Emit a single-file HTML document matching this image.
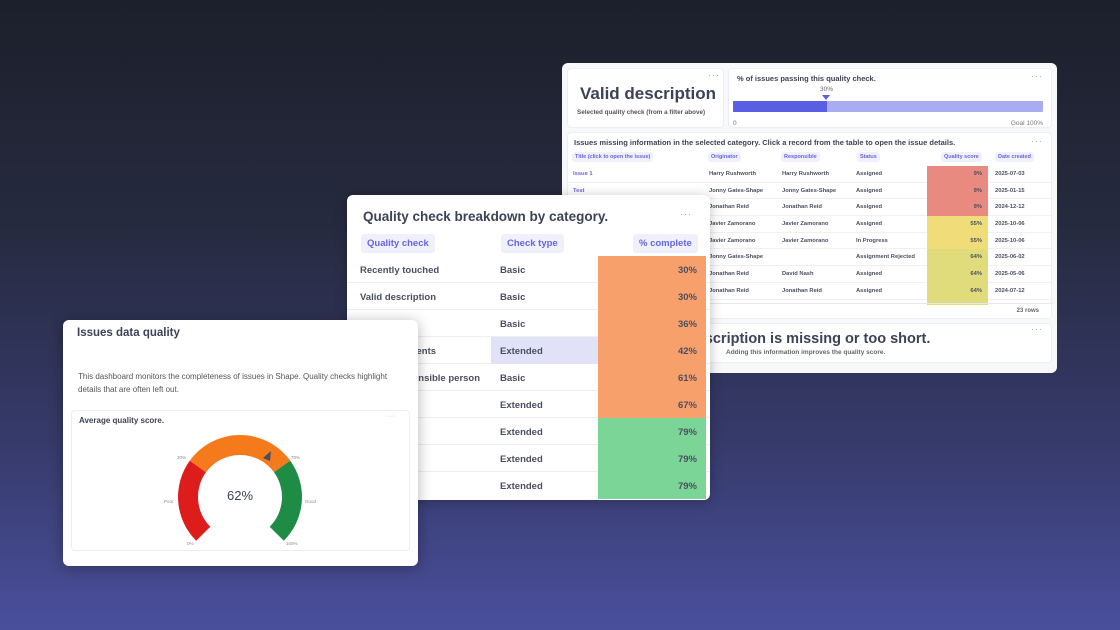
<!DOCTYPE html>
<html><head><meta charset="utf-8"><style>
*{box-sizing:border-box;margin:0;padding:0}
body{width:1120px;height:630px;overflow:hidden;font-family:"Liberation Sans",sans-serif;background:linear-gradient(180deg,#1c202b 0%,#262a3e 35%,#363a6a 70%,#4a4f9c 100%);position:relative;color:#3d4356}
.abs{position:absolute;white-space:nowrap}
.panel{position:absolute;background:#fff;border-radius:6px;overflow:hidden}
.card{position:absolute;border:1px solid #eceef3;border-radius:4px;background:#fff}
.dots{position:absolute;color:#aab;font-size:9px;letter-spacing:1px}
.b{font-weight:bold}
.pill{position:absolute;background:#f0f0fa;color:#6366e0;font-weight:bold;border-radius:3px;white-space:nowrap}
</style></head><body>

<!-- BACK PANEL -->
<div class="panel" style="left:562px;top:63px;width:495px;height:310px;background:#f7f8fa">
  <div class="card" style="left:5px;top:5px;width:157px;height:60px">
    <div class="abs b" style="left:12px;top:15px;font-size:17px;color:#3d4356">Valid description</div>
    <div class="abs b" style="left:9px;top:40px;font-size:6.3px;color:#555">Selected quality check (from a filter above)</div>
    <div class="dots" style="left:140px;top:1px">···</div>
  </div>
  <div class="card" style="left:166px;top:5px;width:324px;height:60px">
    <div class="abs b" style="left:8px;top:5px;font-size:7.5px">% of issues passing this quality check.</div>
    <div class="dots" style="left:302px;top:2px">···</div>
    <div class="abs" style="left:91px;top:17px;font-size:6.5px;color:#666">30%</div>
    <div class="abs" style="left:93px;top:26px;width:0;height:0;border-left:4px solid transparent;border-right:4px solid transparent;border-top:5px solid #5b5fe0"></div>
    <div class="abs" style="left:4px;top:32px;width:310px;height:11px;background:#aaacf2;border-radius:1px"><div style="width:94px;height:11px;background:#5a5ee2"></div></div>
    <div class="abs" style="left:4px;top:51px;font-size:6.5px;color:#777">0</div>
    <div class="abs" style="right:8px;top:51px;font-size:6.5px;color:#777">Goal 100%</div>
  </div>
  <div class="card" style="left:5px;top:69px;width:485px;height:187px">
    <div class="abs b" style="left:6px;top:5px;font-size:7.5px">Issues missing information in the selected category. Click a record from the table to open the issue details.</div>
    <div class="dots" style="left:463px;top:3px">···</div>
    <div class="pill" style="left:4px;top:19px;font-size:5.5px;padding:2px 3px">Title (click to open the issue)</div>
    <div class="pill" style="left:140px;top:19px;font-size:5.5px;padding:2px 3px">Originator</div>
    <div class="pill" style="left:213px;top:19px;font-size:5.5px;padding:2px 3px">Responsible</div>
    <div class="pill" style="left:289px;top:19px;font-size:5.5px;padding:2px 3px">Status</div>
    <div class="pill" style="left:373px;top:19px;font-size:5.5px;padding:2px 3px">Quality score</div>
    <div class="pill" style="left:427px;top:19px;font-size:5.5px;padding:2px 3px">Date created</div>
    <div class="abs" style="left:0;top:33px;width:485px;font-size:5.8px;font-weight:bold;color:#4a4f60">
      <div style="position:relative;height:16.7px;border-bottom:1px solid #f0f0f3"><span class="abs" style="left:5px;top:5px;color:#6366e0">Issue 1</span><span class="abs" style="left:141px;top:5px">Harry Rushworth</span><span class="abs" style="left:214px;top:5px">Harry Rushworth</span><span class="abs" style="left:288px;top:5px">Assigned</span><span class="abs" style="left:359px;top:0;width:61px;height:16.7px;background:#e98a80"><i style="position:absolute;right:6px;top:5px;font-style:normal">9%</i></span><span class="abs" style="left:427px;top:5px">2025-07-03</span></div>
      <div style="position:relative;height:16.7px;border-bottom:1px solid #f0f0f3"><span class="abs" style="left:5px;top:5px;color:#6366e0">Test</span><span class="abs" style="left:141px;top:5px">Jonny Gates-Shape</span><span class="abs" style="left:214px;top:5px">Jonny Gates-Shape</span><span class="abs" style="left:288px;top:5px">Assigned</span><span class="abs" style="left:359px;top:0;width:61px;height:16.7px;background:#e98a80"><i style="position:absolute;right:6px;top:5px;font-style:normal">9%</i></span><span class="abs" style="left:427px;top:5px">2025-01-15</span></div>
      <div style="position:relative;height:16.7px;border-bottom:1px solid #f0f0f3"><span class="abs" style="left:141px;top:5px">Jonathan Reid</span><span class="abs" style="left:214px;top:5px">Jonathan Reid</span><span class="abs" style="left:288px;top:5px">Assigned</span><span class="abs" style="left:359px;top:0;width:61px;height:16.7px;background:#e98a80"><i style="position:absolute;right:6px;top:5px;font-style:normal">9%</i></span><span class="abs" style="left:427px;top:5px">2024-12-12</span></div>
      <div style="position:relative;height:16.7px;border-bottom:1px solid #f0f0f3"><span class="abs" style="left:141px;top:5px">Javier Zamorano</span><span class="abs" style="left:214px;top:5px">Javier Zamorano</span><span class="abs" style="left:288px;top:5px">Assigned</span><span class="abs" style="left:359px;top:0;width:61px;height:16.7px;background:#f0dc78"><i style="position:absolute;right:6px;top:5px;font-style:normal">55%</i></span><span class="abs" style="left:427px;top:5px">2025-10-06</span></div>
      <div style="position:relative;height:16.7px;border-bottom:1px solid #f0f0f3"><span class="abs" style="left:141px;top:5px">Javier Zamorano</span><span class="abs" style="left:214px;top:5px">Javier Zamorano</span><span class="abs" style="left:288px;top:5px">In Progress</span><span class="abs" style="left:359px;top:0;width:61px;height:16.7px;background:#f0dc78"><i style="position:absolute;right:6px;top:5px;font-style:normal">55%</i></span><span class="abs" style="left:427px;top:5px">2025-10-06</span></div>
      <div style="position:relative;height:16.7px;border-bottom:1px solid #f0f0f3"><span class="abs" style="left:141px;top:5px">Jonny Gates-Shape</span><span class="abs" style="left:288px;top:5px">Assignment Rejected</span><span class="abs" style="left:359px;top:0;width:61px;height:16.7px;background:#e0dc7c"><i style="position:absolute;right:6px;top:5px;font-style:normal">64%</i></span><span class="abs" style="left:427px;top:5px">2025-06-02</span></div>
      <div style="position:relative;height:16.7px;border-bottom:1px solid #f0f0f3"><span class="abs" style="left:141px;top:5px">Jonathan Reid</span><span class="abs" style="left:214px;top:5px">David Nash</span><span class="abs" style="left:288px;top:5px">Assigned</span><span class="abs" style="left:359px;top:0;width:61px;height:16.7px;background:#e0dc7c"><i style="position:absolute;right:6px;top:5px;font-style:normal">64%</i></span><span class="abs" style="left:427px;top:5px">2025-05-06</span></div>
      <div style="position:relative;height:16.7px;border-bottom:1px solid #f0f0f3"><span class="abs" style="left:141px;top:5px">Jonathan Reid</span><span class="abs" style="left:214px;top:5px">Jonathan Reid</span><span class="abs" style="left:288px;top:5px">Assigned</span><span class="abs" style="left:359px;top:0;width:61px;height:16.7px;background:#e0dc7c"><i style="position:absolute;right:6px;top:5px;font-style:normal">64%</i></span><span class="abs" style="left:427px;top:5px">2024-07-12</span></div>
      <div style="position:relative;height:5px;overflow:hidden"><span class="abs" style="left:359px;top:0;width:61px;height:5px;background:#e0dc7c"></span></div>
    </div>
    <div class="abs" style="left:0;top:170px;width:485px;border-top:1px solid #e6e7ec"></div>
    <div class="abs b" style="right:12px;top:175px;font-size:6px;color:#666">23 rows</div>
  </div>
  <div class="card" style="left:5px;top:260px;width:485px;height:40px">
    <div class="abs b" style="left:82px;top:7px;font-size:14.5px;color:#3d4356">Valid description is missing or too short.</div>
    <div class="abs b" style="left:158px;top:25px;font-size:6.5px;color:#666">Adding this information improves the quality score.</div>
    <div class="dots" style="left:463px;top:0">···</div>
  </div>
</div>

<!-- MIDDLE PANEL -->
<div class="panel" style="left:347px;top:195px;width:363px;height:305px;box-shadow:0 2px 12px rgba(0,0,0,.25)">
  <div class="abs b" style="left:16px;top:14px;font-size:13.5px;color:#3d4356">Quality check breakdown by category.</div>
  <div class="dots" style="left:333px;top:14px">···</div>
  <div class="pill" style="left:14px;top:39px;font-size:9.5px;padding:4px 6px">Quality check</div>
  <div class="pill" style="left:154px;top:39px;font-size:9.5px;padding:4px 6px">Check type</div>
  <div class="pill" style="left:286px;top:39px;font-size:9.5px;padding:4px 6px">% complete</div>
  <div class="abs" style="left:0;top:61px;width:363px;font-size:9.5px;font-weight:bold;color:#4a4f60">
    <div style="position:relative;height:27px;border-bottom:1px solid #eee"><span class="abs" style="left:13px;top:9px">Recently touched</span><span class="abs" style="left:153px;top:9px">Basic</span><span class="abs" style="left:251px;top:0;width:108px;height:27px;background:#f7a06c"><i style="position:absolute;right:9px;top:9px;font-style:normal">30%</i></span></div>
    <div style="position:relative;height:27px;border-bottom:1px solid #eee"><span class="abs" style="left:13px;top:9px">Valid description</span><span class="abs" style="left:153px;top:9px">Basic</span><span class="abs" style="left:251px;top:0;width:108px;height:27px;background:#f7a06c"><i style="position:absolute;right:9px;top:9px;font-style:normal">30%</i></span></div>
    <div style="position:relative;height:27px;border-bottom:1px solid #eee"><span class="abs" style="left:13px;top:9px;color:#ddd">Has tags</span><span class="abs" style="left:153px;top:9px">Basic</span><span class="abs" style="left:251px;top:0;width:108px;height:27px;background:#f7a06c"><i style="position:absolute;right:9px;top:9px;font-style:normal">36%</i></span></div>
    <div style="position:relative;height:27px;border-bottom:1px solid #eee"><span class="abs" style="left:13px;top:9px">Has attachments</span><span class="abs" style="left:144px;top:0;width:107px;height:27px;background:#e1e1f8"></span><span class="abs" style="left:153px;top:9px">Extended</span><span class="abs" style="left:251px;top:0;width:108px;height:27px;background:#f7a06c"><i style="position:absolute;right:9px;top:9px;font-style:normal">42%</i></span></div>
    <div style="position:relative;height:27px;border-bottom:1px solid #eee"><span class="abs" style="left:0px;top:9px">Assigned responsible person</span><span class="abs" style="left:153px;top:9px">Basic</span><span class="abs" style="left:251px;top:0;width:108px;height:27px;background:#f7a06c"><i style="position:absolute;right:9px;top:9px;font-style:normal">61%</i></span></div>
    <div style="position:relative;height:27px;border-bottom:1px solid #eee"><span class="abs" style="left:153px;top:9px">Extended</span><span class="abs" style="left:251px;top:0;width:108px;height:27px;background:#f7a06c"><i style="position:absolute;right:9px;top:9px;font-style:normal">67%</i></span></div>
    <div style="position:relative;height:27px;border-bottom:1px solid #eee"><span class="abs" style="left:153px;top:9px">Extended</span><span class="abs" style="left:251px;top:0;width:108px;height:27px;background:#7ad597"><i style="position:absolute;right:9px;top:9px;font-style:normal">79%</i></span></div>
    <div style="position:relative;height:27px;border-bottom:1px solid #eee"><span class="abs" style="left:153px;top:9px">Extended</span><span class="abs" style="left:251px;top:0;width:108px;height:27px;background:#7ad597"><i style="position:absolute;right:9px;top:9px;font-style:normal">79%</i></span></div>
    <div style="position:relative;height:27px"><span class="abs" style="left:153px;top:9px">Extended</span><span class="abs" style="left:251px;top:0;width:108px;height:27px;background:#7ad597"><i style="position:absolute;right:9px;top:9px;font-style:normal">79%</i></span></div>
  </div>
</div>

<!-- FRONT PANEL -->
<div class="panel" style="left:63px;top:320px;width:355px;height:246px;box-shadow:0 2px 14px rgba(0,0,0,.3)">
  <div class="abs b" style="left:14px;top:7px;font-size:11.5px;color:#3d4356">Issues data quality</div>
  <div style="position:absolute;left:15px;top:50px;width:330px;font-size:8px;line-height:13px;color:#555">This dashboard monitors the completeness of issues in Shape. Quality checks highlight details that are often left out.</div>
  <div class="card" style="left:8px;top:90px;width:339px;height:141px">
    <div class="abs b" style="left:7px;top:5px;font-size:8px;color:#3d4356">Average quality score.</div>
    <div class="dots" style="left:314px;top:2px;font-size:7px">···</div>
  </div>
  <svg class="abs" style="left:0;top:0" width="355" height="246" viewBox="63 320 355 246">
    <path d="M196.2 540.8 A62 62 0 0 1 189.8 460.6 L206 472.3 A42 42 0 0 0 210.3 526.7 Z" fill="#dd1c1c"/>
    <path d="M189.8 460.6 A62 62 0 0 1 290.2 460.6 L274 472.3 A42 42 0 0 0 206 472.3 Z" fill="#f47a1c"/>
    <path d="M290.2 460.6 A62 62 0 0 1 283.8 540.8 L269.7 526.7 A42 42 0 0 0 274 472.3 Z" fill="#1e8c44"/>
    <path d="M271 451 L263 458 L270 461 Z" fill="#4a4f60"/>
    <text x="240" y="500" text-anchor="middle" font-family="Liberation Sans" font-size="13" fill="#3d4356">62%</text>
    <g font-family="Liberation Sans" font-size="4.5" fill="#888">
      <text x="177" y="459">30%</text><text x="291" y="459">70%</text>
      <text x="164" y="503">Poor</text><text x="305" y="503">Good</text>
      <text x="187" y="545">0%</text><text x="286" y="545">100%</text>
    </g>
  </svg>
</div>
</body></html>
